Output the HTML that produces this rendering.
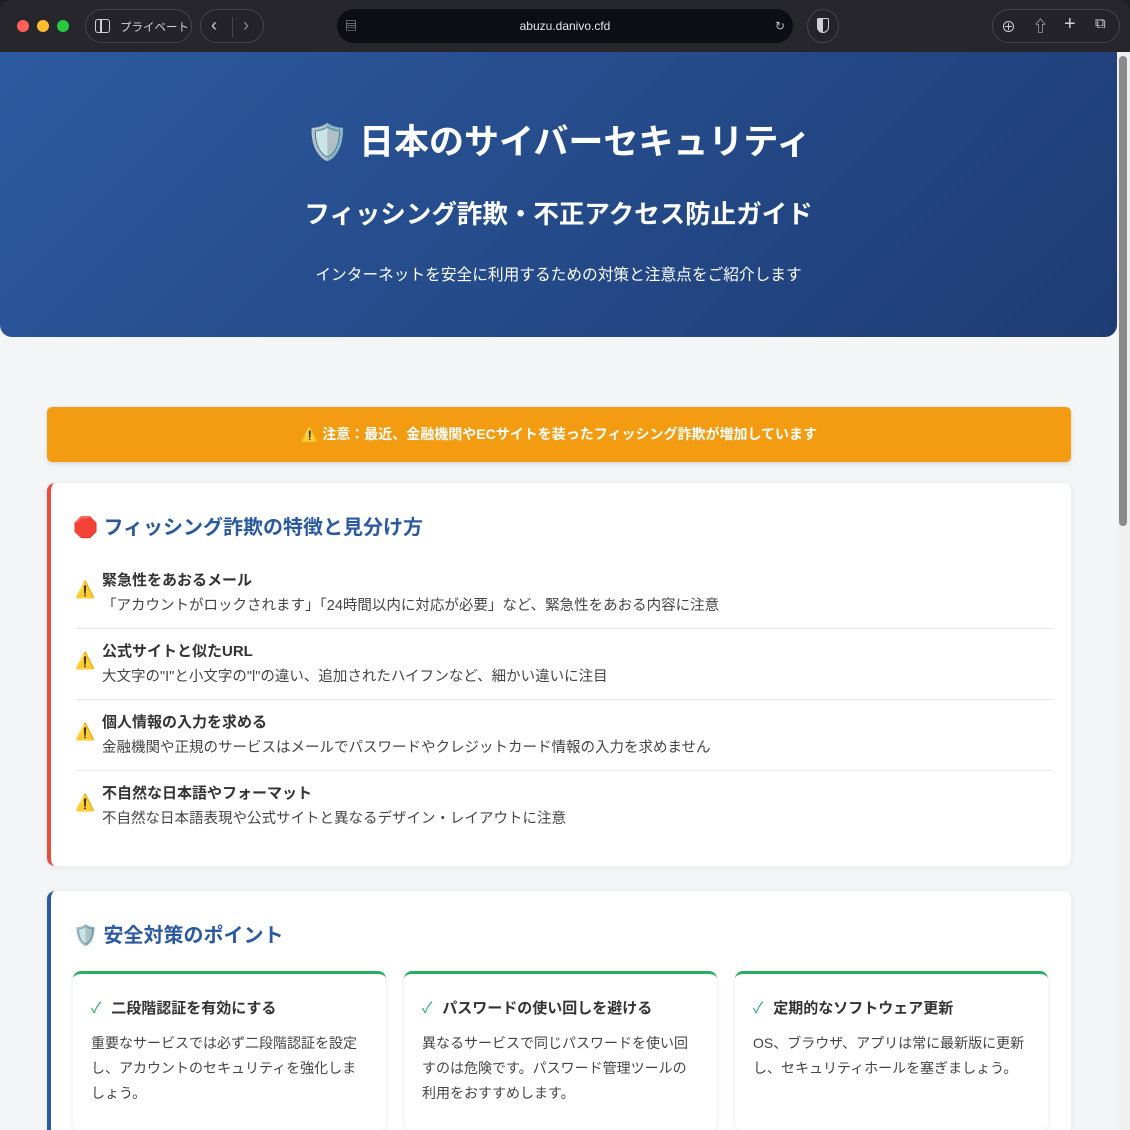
<!DOCTYPE html>
<html><head><meta charset="utf-8"><style>
*{box-sizing:border-box;margin:0;padding:0}
body{width:1130px;height:1130px;overflow:hidden;background:#1f1f24;font-family:"Liberation Sans","Noto Sans CJK JP",sans-serif;position:relative}
.chrome{position:absolute;left:0;top:0;width:1130px;height:52px;background:#26262c;border-radius:12px 12px 0 0}
.dot{position:absolute;top:20px;width:12px;height:12px;border-radius:50%}
.pill{position:absolute;top:9px;height:34px;border:1px solid #44454c;border-radius:17px;background:#232329}
.url{position:absolute;left:337px;top:9px;width:456px;height:34px;border-radius:17px;background:#0d0d16;color:#e8e8ea;font-size:12px;text-align:center;line-height:34px}
.ic{position:absolute;color:#cfcfd4;font-size:13px;white-space:nowrap}
.page{position:absolute;left:0;top:52px;width:1117px;height:1078px;background:#f4f5f7;overflow:hidden}
.sb{position:absolute;left:1117px;top:52px;width:13px;height:1078px;background:#f0f0f0}
.sb div{position:absolute;left:2px;top:4px;width:8px;height:470px;border-radius:4px;background:#8a8a8a}
.hdr{position:absolute;left:0;top:0;width:1117px;height:285px;background:linear-gradient(135deg,#2c5aa0,#1e3c74);border-radius:0 0 12px 12px;color:#fff;text-align:center}
.hdr h1{position:absolute;top:62px;width:100%;font-size:35px;font-weight:bold}
.hdr h2{position:absolute;top:142px;width:100%;font-size:25.5px;font-weight:bold}
.hdr p{position:absolute;top:210px;width:100%;font-size:15.7px}
.alert{position:absolute;left:47px;top:355px;width:1024px;height:55px;background:#f39c12;border-radius:5px;color:#fff;font-weight:bold;font-size:14px;text-align:center;line-height:55px;box-shadow:0 2px 4px rgba(0,0,0,.12)}
.card{position:absolute;left:47px;width:1024px;background:#fff;border-radius:8px;box-shadow:0 1px 6px rgba(0,0,0,.07)}
.card h3{position:absolute;left:22px;font-size:20px;color:#2c5aa0;font-weight:bold}
.item{position:absolute;left:25px;width:977px;height:71px;border-bottom:1px solid #e8e8e8}
.item .w{position:absolute;left:-1px;top:22px;font-size:16px}
.item b{position:absolute;left:26px;top:11px;font-size:15px;color:#333}
.item span.d{position:absolute;left:26px;top:36px;font-size:14.5px;color:#444}
.sub{position:absolute;top:80px;width:313px;height:160px;border-top:3px solid #27ae60;border-radius:8px;background:#fff;box-shadow:0 1px 5px rgba(0,0,0,.1)}
.sub b{position:absolute;left:18px;top:23px;font-size:15px;color:#333}
.sub b i{color:#27ae60;font-style:normal;font-weight:normal;margin-right:10px}
.sub p{position:absolute;left:18px;top:57px;width:275px;font-size:14px;line-height:25px;color:#444}
</style></head><body>
<div class="chrome">
<div class="dot" style="left:17px;background:#fe5f57"></div>
<div class="dot" style="left:37px;background:#febc2e"></div>
<div class="dot" style="left:57px;background:#28c840"></div>
<div class="pill" style="left:85px;width:107px"><span style="position:absolute;left:9px;top:9px;width:15px;height:14px;border:1.5px solid #cfcfd4;border-radius:3px"></span><span style="position:absolute;left:14px;top:10px;width:1.5px;height:12px;background:#cfcfd4"></span><span class="ic" style="left:34px;top:9px;font-size:11.5px">プライベート</span></div>
<div class="pill" style="left:200px;width:64px"><span class="ic" style="left:10px;top:5px;font-size:18px">‹</span><span style="position:absolute;left:31px;top:7px;width:1px;height:20px;background:#44454c"></span><span class="ic" style="left:42px;top:5px;font-size:18px;color:#8a8a90">›</span></div>
<div class="url"><span style="position:absolute;left:8px;top:0;color:#bbb">▤</span>abuzu.danivo.cfd<span style="position:absolute;right:8px;top:0;color:#bbb">↻</span></div>
<div class="pill" style="left:807px;width:32px;border-radius:50%"><span style="position:absolute;left:9px;top:8px;width:12px;height:15px;border:1.5px solid #cfcfd4;border-radius:2px 2px 7px 7px;background:linear-gradient(90deg,#cfcfd4 50%,transparent 50%)"></span></div>
<div class="pill" style="left:992px;width:128px"><span class="ic" style="left:8px;top:6px;font-size:15px">⊕</span><span class="ic" style="left:40px;top:5px;font-size:15px">⇧</span><span class="ic" style="left:71px;top:3px;font-size:20px">+</span><span class="ic" style="left:102px;top:5px;font-size:15px">⧉</span></div>
</div>
<div class="page">
<div class="hdr">
<h1>🛡️ 日本のサイバーセキュリティ</h1>
<h2>フィッシング詐欺・不正アクセス防止ガイド</h2>
<p>インターネットを安全に利用するための対策と注意点をご紹介します</p>
</div>
<div class="alert">⚠️ 注意：最近、金融機関やECサイトを装ったフィッシング詐欺が増加しています</div>
<div class="card" style="top:431px;height:383px;border-left:4px solid #e74c3c">
<h3 style="top:28px">🛑 フィッシング詐欺の特徴と見分け方</h3>
<div class="item" style="top:75px"><span class="w">⚠️</span><b>緊急性をあおるメール</b><span class="d">「アカウントがロックされます」「24時間以内に対応が必要」など、緊急性をあおる内容に注意</span></div>
<div class="item" style="top:146px"><span class="w">⚠️</span><b>公式サイトと似たURL</b><span class="d">大文字の"I"と小文字の"l"の違い、追加されたハイフンなど、細かい違いに注目</span></div>
<div class="item" style="top:217px"><span class="w">⚠️</span><b>個人情報の入力を求める</b><span class="d">金融機関や正規のサービスはメールでパスワードやクレジットカード情報の入力を求めません</span></div>
<div class="item" style="top:288px;border:none"><span class="w">⚠️</span><b>不自然な日本語やフォーマット</b><span class="d">不自然な日本語表現や公式サイトと異なるデザイン・レイアウトに注意</span></div>
</div>
<div class="card" style="top:839px;height:260px;border-left:4px solid #2c5aa0">
<h3 style="top:28px">🛡️ 安全対策のポイント</h3>
<div class="sub" style="left:22px"><b><i>✓</i>二段階認証を有効にする</b><p>重要なサービスでは必ず二段階認証を設定し、アカウントのセキュリティを強化しましょう。</p></div>
<div class="sub" style="left:353px"><b><i>✓</i>パスワードの使い回しを避ける</b><p>異なるサービスで同じパスワードを使い回すのは危険です。パスワード管理ツールの利用をおすすめします。</p></div>
<div class="sub" style="left:684px"><b><i>✓</i>定期的なソフトウェア更新</b><p>OS、ブラウザ、アプリは常に最新版に更新し、セキュリティホールを塞ぎましょう。</p></div>
</div>
</div>
<div class="sb"><div></div></div>
</body></html>
